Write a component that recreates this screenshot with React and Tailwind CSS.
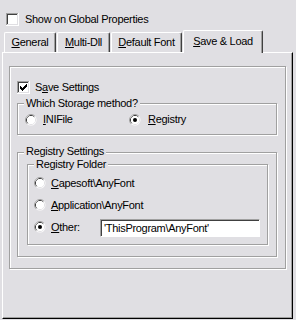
import React from "react";

const CheckBox = ({ checked }) => (
  <svg width="13" height="13" viewBox="0 0 13 13" shapeRendering="crispEdges" className="shrink-0">
    <rect x="0" y="0" width="13" height="13" fill="#ffffff" />
    <rect x="0" y="0" width="12" height="12" fill="#a0a0a0" />
    <rect x="1" y="1" width="11" height="11" fill="#e0dfe3" />
    <rect x="1" y="1" width="10" height="10" fill="#404040" />
    <rect x="2" y="2" width="9" height="9" fill="#ffffff" />
    {checked && (
      <g fill="#000000">
        <rect x="3" y="5" width="1" height="3" />
        <rect x="4" y="6" width="1" height="3" />
        <rect x="5" y="7" width="1" height="3" />
        <rect x="6" y="6" width="1" height="3" />
        <rect x="7" y="5" width="1" height="3" />
        <rect x="8" y="4" width="1" height="3" />
        <rect x="9" y="3" width="1" height="3" />
      </g>
    )}
  </svg>
);

const Radio = ({ checked }) => (
  <svg width="12" height="12" viewBox="0 0 12 12" className="shrink-0">
    <circle cx="6" cy="6" r="5.5" fill="#ffffff" />
    <path d="M2.11 9.89 A5.5 5.5 0 0 1 9.89 2.11" fill="none" stroke="#a0a0a0" strokeWidth="1" />
    <circle cx="6" cy="6" r="4.5" fill="none" stroke="#e0dfe3" strokeWidth="1" />
    <path d="M2.82 9.18 A4.5 4.5 0 0 1 9.18 2.82" fill="none" stroke="#404040" strokeWidth="1" />
    <circle cx="6" cy="6" r="4" fill="#ffffff" />
    {checked && <circle cx="6" cy="6" r="2" fill="#000000" />}
  </svg>
);

// etched frame, caption sits on the top line
const Group = ({ caption, captionTop = "-top-[5px]", className, children }) => (
  <div className={`relative border border-[#a0a0a0] shadow-[inset_1px_1px_0_#ffffff,1px_1px_0_#ffffff] ${className}`}>
    {caption && (
      <span className={`absolute ${captionTop} left-[6px] bg-[#e0dfe3] px-[2px] leading-[9px]`}>{caption}</span>
    )}
    {children}
  </div>
);

const Tab = ({ children, width }) => (
  <div className={`flex h-[20px] ${width} items-center justify-center border-l border-t border-r border-l-white border-t-white border-r-[#404040] shadow-[inset_-1px_0_0_#a0a0a0] rounded-tl-[2px] rounded-tr-[2px]`}>
    {children}
  </div>
);

export default function App() {
  return (
    <div
      className="w-[296px] h-[320px] bg-[#e0dfe3] text-black text-[11px] leading-[13px] tracking-[-0.3px] overflow-hidden"
      style={{ fontFamily: '"Liberation Sans", Arial, sans-serif' }}
    >
      {/* Global checkbox */}
      <div className="flex items-center gap-[6px] pt-[13px] pl-[6px]">
        <CheckBox />
        <span>Show on Global Properties</span>
      </div>

      {/* Tabs */}
      <div className="mt-[4px] flex h-[22px] items-end gap-[1px] pl-[4px]">
        <Tab width="w-[52px]"><span><u>G</u>eneral</span></Tab>
        <Tab width="w-[53px]"><span><u>M</u>ulti-Dll</span></Tab>
        <Tab width="w-[71px]"><span><u>D</u>efault Font</span></Tab>
        <div className="relative z-10 -mb-[1px] flex h-[23px] w-[80px] justify-center border-l border-t border-r border-l-white border-t-white border-r-[#404040] bg-[#e0dfe3] pt-[4px] shadow-[inset_-1px_0_0_#a0a0a0] rounded-tl-[2px] rounded-tr-[2px]">
          <span><u>S</u>ave &amp; Load</span>
        </div>
      </div>

      {/* Panel */}
      <div className="ml-[2px] h-[267px] w-[291px] border-l border-t border-r border-b border-l-white border-t-white border-r-black border-b-black pl-[6px] pt-[13px] shadow-[inset_-1px_-1px_0_#a0a0a0]">
        <Group className="h-[203px] w-[277px] pl-[7px] pt-[14px]">
          <div className="flex items-center gap-[5px]">
            <CheckBox checked />
            <span>S<u>a</u>ve Settings</span>
          </div>

          <Group caption="Which Storage method?" className="mt-[9px] h-[32px] w-[260px] pl-[7px] pt-[9px]">
            <div className="flex items-center">
              <div className="flex w-[104px] items-center gap-[6px]">
                <Radio />
                <span><u>I</u>NIFile</span>
              </div>
              <div className="flex items-center gap-[7px]">
                <Radio checked />
                <span><u>R</u>egistry</span>
              </div>
            </div>
          </Group>

          <Group caption="Registry Settings" captionTop="-top-[6px]" className="mt-[17px] h-[105px] w-[260px] pl-[9px] pt-[11px]">
            <Group caption="Registry Folder" className="h-[81px] w-[241px] pl-[6px] pt-[7px]">
              <div className="flex h-[22px] items-center gap-[5px]">
                <Radio />
                <span><u>C</u>apesoft\AnyFont</span>
              </div>
              <div className="flex h-[22px] items-center gap-[5px]">
                <Radio />
                <span><u>A</u>pplication\AnyFont</span>
              </div>
              <div className="flex h-[22px] items-center">
                <div className="flex w-[66px] items-center gap-[5px]">
                  <Radio checked />
                  <span><u>O</u>ther:</span>
                </div>
                <div className="mt-[2px] flex h-[18px] w-[160px] items-center border-l border-t border-r border-b border-l-[#a0a0a0] border-t-[#a0a0a0] border-r-white border-b-white bg-white pl-[3px] shadow-[inset_1px_1px_0_#404040]">
                  'ThisProgram\AnyFont'
                </div>
              </div>
            </Group>
          </Group>
        </Group>
      </div>
    </div>
  );
}
